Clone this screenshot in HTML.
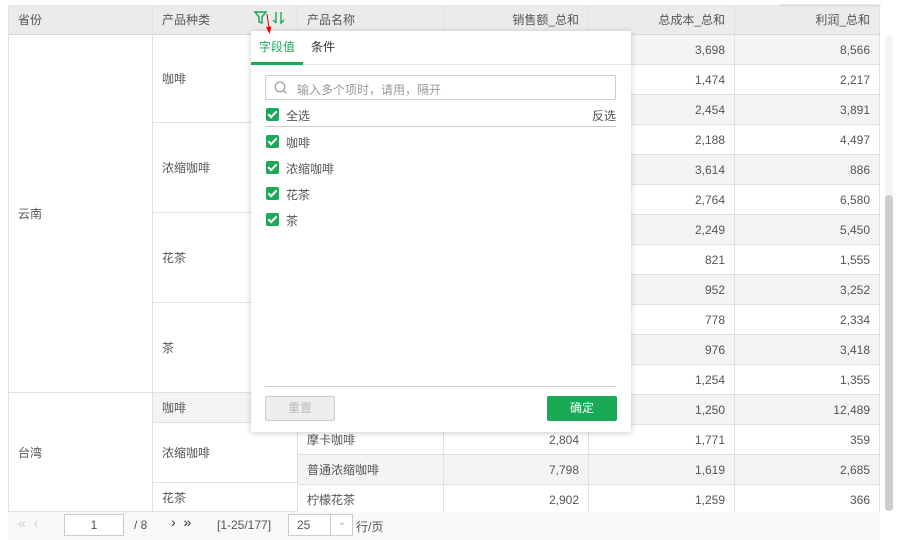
<!DOCTYPE html>
<html><head><meta charset="utf-8"><style>
*{box-sizing:border-box;margin:0;padding:0}
body{width:913px;height:540px;background:#fff;font-family:"Liberation Sans","Noto Sans CJK SC",sans-serif;font-size:12px;color:#555;position:relative;overflow:hidden}
.c{position:absolute;border-right:1px solid #e0e0e0;border-bottom:1px solid #e0e0e0;padding:0 9px;display:flex;align-items:center}
.r{justify-content:flex-end}
.h{background:#ebebeb;height:30px;top:5px;border-bottom:1px solid #d8d8d8}
.g{background:#f4f4f4}
.pop{position:absolute;left:251px;top:31px;width:380px;height:401px;background:#fff;box-shadow:0 1px 6px rgba(0,0,0,.2);z-index:1}
.cb{position:absolute;left:15px;width:13px;height:13px;background:#1aaa55;border-radius:2px}
.cb::after{content:"";position:absolute;left:4px;top:1px;width:3px;height:7px;border:solid #fff;border-width:0 2px 2px 0;transform:rotate(45deg)}
.lb{position:absolute;left:35px}
</style></head><body>
<div style="position:absolute;left:8px;top:5px;width:872px;height:1px;background:#ddd"></div>
<div class="c h" style="left:8px;width:145px;border-left:1px solid #e0e0e0">省份</div>
<div class="c h" style="left:153px;width:145px">产品种类
<svg style="position:absolute;left:101px;top:4px;overflow:visible;z-index:5" width="34" height="30"><path d="M1 3h11l-4 5v6l-3-1V8z" fill="none" stroke="#1aaa55" stroke-width="1.5"/><path d="M22 3v11M19 11l3 3" stroke="#1aaa55" stroke-width="1.4" fill="none"/><path d="M27 3v11l3-3" stroke="#1aaa55" stroke-width="1.4" fill="none"/><path d="M13 5l2 14" stroke="#e00" stroke-width="1"/><path d="M12 18l3.5 7 2-7.5z" fill="#e00"/></svg></div>
<div class="c h" style="left:298px;width:146px">产品名称</div>
<div class="c h r" style="left:444px;width:145px">销售额_总和</div>
<div class="c h r" style="left:589px;width:146px">总成本_总和</div>
<div class="c h r" style="left:735px;width:145px">利润_总和</div>

<div class="c" style="left:8px;top:35px;width:145px;height:358px;border-left:1px solid #e0e0e0">云南</div>
<div class="c" style="left:8px;top:393px;width:145px;height:119px;border-left:1px solid #e0e0e0">台湾</div>
<div class="c" style="left:153px;top:35px;width:145px;height:88px">咖啡</div>
<div class="c" style="left:153px;top:123px;width:145px;height:90px">浓缩咖啡</div>
<div class="c" style="left:153px;top:213px;width:145px;height:90px">花茶</div>
<div class="c" style="left:153px;top:303px;width:145px;height:90px">茶</div>
<div class="c g" style="left:153px;top:393px;width:145px;height:30px">咖啡</div>
<div class="c" style="left:153px;top:423px;width:145px;height:60px">浓缩咖啡</div>
<div class="c" style="left:153px;top:483px;width:145px;height:29px">花茶</div>

<div id="rows"></div>
<script>
var v=[["3,698","8,566"],["1,474","2,217"],["2,454","3,891"],["2,188","4,497"],["3,614","886"],["2,764","6,580"],["2,249","5,450"],["821","1,555"],["952","3,252"],["778","2,334"],["976","3,418"],["1,254","1,355"],["1,250","12,489"],["1,771","359"],["1,619","2,685"],["1,259","366"]];
var nm={13:["摩卡咖啡","2,804"],14:["普通浓缩咖啡","7,798"],15:["柠檬花茶","2,902"]};
var h="";
for(var i=0;i<16;i++){var t=35+i*30,g=i%2==0?" g":"";
var n=nm[i]||["",""];
h+='<div class="c'+g+'" style="left:298px;top:'+t+'px;width:146px;height:30px">'+n[0]+'</div>';
h+='<div class="c r'+g+'" style="left:444px;top:'+t+'px;width:145px;height:30px">'+n[1]+'</div>';
h+='<div class="c r'+g+'" style="left:589px;top:'+t+'px;width:146px;height:30px">'+v[i][0]+'</div>';
h+='<div class="c r'+g+'" style="left:735px;top:'+t+'px;width:145px;height:30px">'+v[i][1]+'</div>';}
document.getElementById("rows").outerHTML=h;
</script>
<div style="position:absolute;left:885px;top:35px;width:8px;height:476px;background:#f4f4f4;border-radius:4px"></div>
<div style="position:absolute;left:885px;top:195px;width:8px;height:316px;background:#cdcdcd;border-radius:4px"></div>
<div style="position:absolute;left:779px;top:0;width:101px;height:4px;background:#fff;box-shadow:0 1px 3px rgba(0,0,0,.15)"></div>

<div class="pop">
<div style="position:absolute;left:8px;top:7px;color:#1aaa55;font-size:12px">字段值</div>
<div style="position:absolute;left:60px;top:7px;font-size:12px;color:#333">条件</div>
<div style="position:absolute;left:0;top:33px;width:380px;height:1px;background:#e6e6e6"></div>
<div style="position:absolute;left:0;top:31px;width:52px;height:3px;background:#1aaa55"></div>
<div style="position:absolute;left:14px;top:44px;width:351px;height:25px;border:1px solid #ccc;border-radius:2px">
<svg style="position:absolute;left:8px;top:5px" width="14" height="14"><circle cx="6" cy="6" r="4.8" fill="none" stroke="#999" stroke-width="1.2"/><path d="M9.5 9.5l3 3" stroke="#999" stroke-width="1.2"/></svg>
<span style="position:absolute;left:31px;top:5px;color:#999">输入多个项时，请用，隔开</span></div>
<div class="cb" style="top:77px"></div><div class="lb" style="top:76px">全选</div>
<div style="position:absolute;right:15px;top:76px">反选</div>
<div style="position:absolute;left:14px;top:95px;width:351px;height:1px;background:#ccc"></div>
<div class="cb" style="top:104px"></div><div class="lb" style="top:103px">咖啡</div>
<div class="cb" style="top:130px"></div><div class="lb" style="top:129px">浓缩咖啡</div>
<div class="cb" style="top:156px"></div><div class="lb" style="top:155px">花茶</div>
<div class="cb" style="top:182px"></div><div class="lb" style="top:181px">茶</div>
<div style="position:absolute;left:14px;top:355px;width:351px;height:1px;background:#ccc"></div>
<div style="position:absolute;left:14px;top:365px;width:70px;height:25px;border:1px solid #ccc;background:#eee;border-radius:2px;color:#bbb;text-align:center;line-height:23px">重置</div>
<div style="position:absolute;left:296px;top:365px;width:70px;height:25px;background:#1aaa55;border-radius:2px;color:#fff;text-align:center;line-height:25px">确定</div>
</div>

<div style="position:absolute;left:8px;top:512px;width:872px;height:28px;background:#f8f8f8"></div>
<div style="position:absolute;left:18px;top:515px;color:#ccc;font-size:14px">«&nbsp;&nbsp;‹</div>
<div style="position:absolute;left:64px;top:514px;width:60px;height:22px;border:1px solid #ccc;background:#fff;text-align:center;line-height:20px">1</div>
<div style="position:absolute;left:134px;top:518px">/ 8</div>
<div style="position:absolute;left:171px;top:514px;font-size:14px;color:#333">›&nbsp;&nbsp;»</div>
<div style="position:absolute;left:217px;top:518px">[1-25/177]</div>
<div style="position:absolute;left:288px;top:514px;width:65px;height:22px;border:1px solid #ccc;background:#fff;line-height:20px;padding-left:8px">25<span style="position:absolute;left:41px;top:0;width:1px;height:20px;background:#ccc"></span><span style="position:absolute;left:49px;top:-2px;color:#aaa;font-size:10px">⌄</span></div>
<div style="position:absolute;left:356px;top:518px">行/页</div>
</body></html>
